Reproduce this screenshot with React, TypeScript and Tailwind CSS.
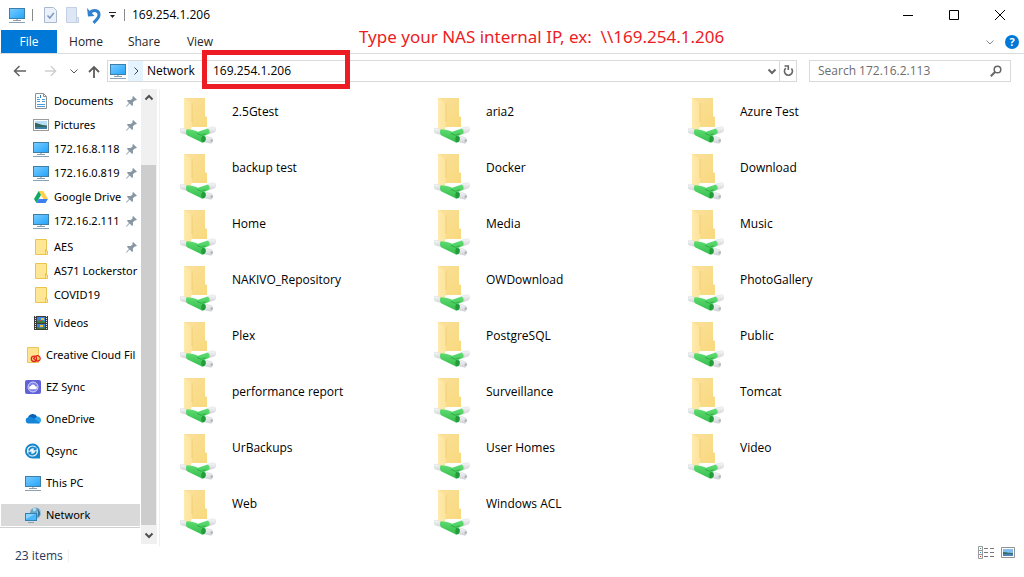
import { ReactNode } from 'react';
import { clsx } from 'clsx';

const FILES = [
  '2.5Gtest', 'aria2', 'Azure Test',
  'backup test', 'Docker', 'Download',
  'Home', 'Media', 'Music',
  'NAKIVO_Repository', 'OWDownload', 'PhotoGallery',
  'Plex', 'PostgreSQL', 'Public',
  'performance report', 'Surveillance', 'Tomcat',
  'UrBackups', 'User Homes', 'Video',
  'Web', 'Windows ACL',
];

function MonitorIcon() {
  return (
    <svg width="17" height="16" viewBox="0 0 17 16" className="shrink-0">
      <defs>
        <linearGradient id="screen" x1="0" y1="0" x2="1" y2="1">
          <stop offset="0" stopColor="#7ccbff" />
          <stop offset="0.5" stopColor="#4db8ff" />
          <stop offset="1" stopColor="#22a3f7" />
        </linearGradient>
      </defs>
      <rect x="0.5" y="1.5" width="15" height="10" fill="url(#screen)" stroke="#3d7fa8" />
      <path d="M4 13.5h8" stroke="#8c9fad" />
      <path d="M7 12.5h2" stroke="#b9c7d1" />
      <path d="M0 15.5h16" stroke="#8ba3b5" />
    </svg>
  );
}

function DocumentIcon() {
  return (
    <svg width="16" height="16" viewBox="0 0 16 16" className="shrink-0">
      <path d="M2.5 0.5h8l3 3v12h-11z" fill="#fff" stroke="#909090" />
      <path d="M10.5 0.5v3h3" fill="none" stroke="#909090" />
      <path d="M4 4.5h2M4 6.5h3M9 6.5h3M4 8.5h3M4 11.5h8M4 13.5h8M9 8.5h3" stroke="#4a9cd8" />
      <path d="M7 2h1v3H7z" fill="#2b7dbd" />
    </svg>
  );
}

function PictureIcon() {
  return (
    <svg width="16" height="16" viewBox="0 0 16 16" className="shrink-0">
      <rect x="0.5" y="2.5" width="15" height="11" fill="#fff" stroke="#9b9b9b" />
      <path d="M2 4h12v8H2z" fill="#b8dcf5" />
      <path d="M2 6c3 0 5 2 12 2.5V10H2z" fill="#32685d" />
      <path d="M2 10h12v2H2z" fill="#3f7ea8" />
    </svg>
  );
}

function FolderIcon() {
  return (
    <svg width="16" height="16" viewBox="0 0 16 16" className="shrink-0">
      <path d="M2.5 0.5h11v11.5h1v3.5h-12z" fill="#ffe694" stroke="#e8c553" />
      <path d="M12.5 15V10.5h1.5" fill="none" stroke="#e8c553" />
    </svg>
  );
}

function DriveIcon() {
  return (
    <svg width="16" height="16" viewBox="0 0 16 16" className="shrink-0">
      <path d="M5.7 2h4.6l4.6 8h-4.6z" fill="#ffcf48" />
      <path d="M5.7 2l2.3 4-4.6 8L1 10z" fill="#11a861" />
      <path d="M5.6 10h9.3l-2.3 4H3.4z" fill="#3d7ef0" />
    </svg>
  );
}

function VideoIcon() {
  return (
    <svg width="16" height="16" viewBox="0 0 16 16" className="shrink-0">
      <path d="M1 1h14v14H1z" fill="#3c3c3c" />
      <path d="M2.5 1v14M13.5 1v14" stroke="#e5e5e5" strokeDasharray="1 1" />
      <path d="M4 2h8v6H4zM4 9h8v5H4z" fill="#3c86d8" />
      <path d="M4 6l4-1 4 2v1H4zM4 12l4 1 4-1v2H4z" fill="#3f7b30" />
      <path d="M8 3h3v2H8zM7 10h3v2H7z" fill="#edc13c" />
      <path d="M7 5h2v1H7z" fill="#d64635" />
    </svg>
  );
}

function CreativeCloudIcon() {
  return (
    <svg width="16" height="16" viewBox="0 0 16 16" className="shrink-0">
      <path d="M2.5 0.5h11v15h-11z" fill="#ffe391" stroke="#ebc65b" />
      <g fill="none" stroke="#e1251b" strokeWidth="1.3">
        <circle cx="9" cy="11.8" r="2.7" />
        <path d="M8 12l2.500-2.600c1.500-1.400 4.700-.6 4.700 2s-3 3.300-4.500 1.800L8.500 11" />
      </g>
    </svg>
  );
}

function EzSyncIcon() {
  return (
    <svg width="16" height="16" viewBox="0 0 16 16" className="shrink-0">
      <rect y="1" width="16" height="14" rx="2" fill="#6161d8" />
      <circle cx="8" cy="8" r="5" fill="#7f82e8" stroke="#d5d6fa" strokeWidth="1" />
      <path d="M5.5 10.2a1.5 1.5 0 0 1 .2-3 2.4 2.4 0 0 1 4.6 0 1.5 1.5 0 0 1 .2 3z" fill="#fff" />
    </svg>
  );
}

function OneDriveIcon() {
  return (
    <svg width="16" height="16" viewBox="0 0 16 16" className="shrink-0">
      <path d="M3 7a4.900 4.900 0 0 1 9.200-1.200L9 9z" fill="#0a63b8" />
      <path d="M9 8l3.200-2.500a3.600 3.600 0 0 1 3.800 3.700c0 2-1.400 3.300-3.200 3.300z" fill="#2ba5ec" />
      <path d="M3.300 6.300c2-.8 3.900-.2 5 .7l6.600 5c-.6.4-1.300.6-2 .6H3.400a3.200 3.200 0 0 1-.1-6.300z" fill="#1585d8" />
    </svg>
  );
}

function QsyncIcon() {
  return (
    <svg width="16" height="16" viewBox="0 0 16 16" className="shrink-0">
      <path d="M7.5 0.5A7.3 7.3 0 0 1 15 8v7.5H7.5a7.5 7.5 0 0 1 0-15z" fill="#1785ca" />
      <circle cx="7.5" cy="8" r="5.6" fill="#e9f6fd" />
      <path d="M4 7.6a3.6 3.6 0 0 1 6.3-2M11 8.4a3.6 3.6 0 0 1-6.3 2" fill="none" stroke="#1b88cc" strokeWidth="1.8" />
      <path d="M11.6 3.5v3.8H8zM3.4 12.5V8.7H7z" fill="#1b88cc" />
    </svg>
  );
}

function NetworkIcon() {
  return (
    <svg width="17" height="16" viewBox="0 0 17 16" className="shrink-0">
      <circle cx="10.5" cy="6" r="5.5" fill="#6ba7c8" />
      <path d="M8 1.500c2-1.300 4 .3 3 1.800S8.600 4.500 8 4zM12 4l3-1c1 2 1 4-.6 6L12 7z" fill="#b6dcea" />
      <path d="M12.500 2c2 1 3 3 2.500 6l-2 2z" fill="#3f7596" />
      <rect x="0.5" y="6.5" width="11" height="7" fill="#49b7fb" stroke="#2f81b5" />
      <path d="M1 7h9L1 12z" fill="#8bd4ff" />
      <path d="M3 15.500h6" stroke="#8ba3b5" />
    </svg>
  );
}

function PinIcon() {
  return (
    <svg width="11" height="11" viewBox="0 0 10 10" className="shrink-0">
      <path d="M6.500 0L10 3.500 8.800 4.200 8 4 6.300 5.700V8.300L5.500 9 3.300 6.800 0.500 9.700 0 9.300 2.700 6.300 0.800 4.400 1.700 3.600 4.300 3.700 6 2 5.800 1z" fill="#8897a3" />
    </svg>
  );
}

function SharedFolderIcon() {
  return (
    <svg width="36" height="46" viewBox="0 0 36 46" className="shrink-0">
      <defs>
        <linearGradient id="back" x1="0" y1="0" x2="1" y2="1">
          <stop offset="0" stopColor="#fae09a" />
          <stop offset="1" stopColor="#f9d97c" />
        </linearGradient>
        <linearGradient id="flap" x1="0" y1="0" x2="1" y2="0">
          <stop offset="0" stopColor="#ffeaae" />
          <stop offset="1" stopColor="#fde49c" />
        </linearGradient>
        <linearGradient id="cap" x1="0" y1="0" x2="0" y2="1">
          <stop offset="0" stopColor="#f7f8f9" />
          <stop offset="1" stopColor="#cfd2d5" />
        </linearGradient>
        <linearGradient id="pipe" x1="0" y1="0" x2="0" y2="1">
          <stop offset="0" stopColor="#5fdc72" />
          <stop offset="1" stopColor="#36bd4d" />
        </linearGradient>
      </defs>
      <path d="M4 0h21v18l2 1v10H12L4 33z" fill="url(#back)" />
      <path d="M4 0l8 5v22l-2 7-6-1z" fill="url(#flap)" />
      <path d="M12 5v19" stroke="#e9c469" strokeWidth="0.6" />
      <path d="M1 30l7 1.500v5.500l-7-2c-1.300-1-1.300-4 0-5z" fill="url(#cap)" stroke="#d4d7d9" strokeWidth="0.5" />
      <path d="M27 30.500l6.500-1.800c2.500 0 3 4 1 5.300L29 36z" fill="url(#cap)" stroke="#d4d7d9" strokeWidth="0.5" />
      <path d="M24 37.500l7.500 2.300c2 1 1.500 5.300-.7 5.500L23 43.500z" fill="url(#cap)" stroke="#cbcfd2" strokeWidth="0.5" />
      <path d="M7 31.200c4 0 8 1.200 11 2.500l9-2.900c2.500-.4 3.800 4 1.300 5.400l-4 1.600c1.500.8 1.700 2.300 1.200 4-.5 2-1.700 3-3.500 2.600L8 37.800c-2.500-1.500-2.500-5.300-1-6.600z" fill="url(#pipe)" />
      <path d="M22.500 38c-1.400 1.200-1.600 4-.5 6.200 2.500.5 3.800-1.200 3.700-3.900 0-1.500-1.200-2.500-3.200-2.300z" fill="#249c3d" />
      <path d="M17 35.500l4.500 1.800 4-1.500" fill="none" stroke="#2fae46" strokeWidth="1" />
      <circle cx="31.7" cy="42.6" r="1.3" fill="#b4b9bd" />
    </svg>
  );
}

interface NavRowProps {
  icon: ReactNode;
  label: string;
  pinned?: boolean;
}

function QuickRow({ icon, label, pinned }: NavRowProps) {
  return (
    <a href="#" className="flex h-6 items-center whitespace-nowrap pl-[33px] pr-[3px]">
      <span className="flex w-[21px] shrink-0">{icon}</span>
      <span className="min-w-0 flex-1">{label}</span>
      {pinned && <PinIcon />}
    </a>
  );
}

function RootRow({ icon, label, selected }: { icon: ReactNode; label: string; selected?: boolean }) {
  return (
    <a href="#" className="flex h-8 items-center">
      <span
        className={clsx(
          'ml-px flex h-[22px] flex-1 items-center whitespace-nowrap pl-6',
          selected && 'bg-[#d9d9d9]'
        )}
      >
        <span className="flex w-[21px] shrink-0">{icon}</span>
        {label}
      </span>
    </a>
  );
}

function Chevron({ className }: { className?: string }) {
  return (
    <svg width="10" height="10" viewBox="0 0 10 10" fill="none" stroke="currentColor" className={className}>
      <path d="M1.500 3.500L5 7l3.500-3.500" />
    </svg>
  );
}

function TitleBar() {
  return (
    <header className="flex h-[30px] items-center pl-[9px]">
      <MonitorIcon />
      <span className="ml-1.5 h-3 w-px bg-[#8a8a8a]" />
      <button aria-label="Properties" className="ml-[11px]">
        <svg width="13" height="16" viewBox="0 0 13 16">
          <path d="M.5.5h9l3 3v12H.5z" fill="#eaf1fa" stroke="#a9bad0" />
          <path d="M3.500 8.500l2.300 2.500 4-5" fill="none" stroke="#7f99bb" strokeWidth="1.500" />
        </svg>
      </button>
      <button aria-label="New folder" className="ml-[9px]">
        <svg width="13" height="16" viewBox="0 0 13 16">
          <path d="M.5.5h10v10h2v5H.5z" fill="#dde7f5" stroke="#c3d0e3" />
          <path d="M10.500 15v-4.500" stroke="#c3d0e3" />
        </svg>
      </button>
      <button aria-label="Undo" className="ml-2">
        <svg width="14" height="17" viewBox="0 0 14 17">
          <path d="M3 5.500C7 2 12.300 3.500 12 8.200c-.2 3-2.500 5-5.500 7.600" fill="none" stroke="#2f80cf" strokeWidth="3" />
          <path d="M0 1l1 8.500L7.500 9z" fill="#2f80cf" />
        </svg>
      </button>
      <button aria-label="Customize toolbar" className="ml-2">
        <svg width="7" height="8" viewBox="0 0 7 8">
          <path d="M0 1.500h7" stroke="#222" />
          <path d="M1 4h5L3.500 7z" fill="#222" />
        </svg>
      </button>
      <span className="ml-2 h-3 w-px bg-[#8a8a8a]" />
      <h1 className="ml-[7px]">169.254.1.206</h1>
      <div className="ml-auto flex items-center gap-9 pr-[19px]">
        <button aria-label="Minimize">
          <svg width="10" height="10" viewBox="0 0 10 10"><path d="M0 5.500h10" stroke="#000" /></svg>
        </button>
        <button aria-label="Maximize">
          <svg width="10" height="10" viewBox="0 0 10 10"><path d="M.5.5h9v9h-9z" fill="none" stroke="#000" /></svg>
        </button>
        <button aria-label="Close">
          <svg width="10" height="10" viewBox="0 0 10 10"><path d="M0 0l10 10M10 0L0 10" stroke="#000" /></svg>
        </button>
      </div>
    </header>
  );
}

function RibbonTabs() {
  return (
    <nav className="flex h-6 items-stretch border-b border-[#dadbdc] pl-px text-[#262626]">
      <button className="w-14 bg-[#0078d7] text-white">File</button>
      <button className="w-[58px]">Home</button>
      <button className="w-[58px]">Share</button>
      <button className="w-[54px]">View</button>
      <div className="ml-auto flex items-center gap-[10px] pr-[5px]">
        <button aria-label="Expand ribbon"><Chevron className="text-[#888]" /></button>
        <button aria-label="Help" className="flex h-[14px] w-[14px] items-center justify-center rounded-full bg-[#0078d7] text-[11px] font-bold leading-none text-white">
          ?
        </button>
      </div>
    </nav>
  );
}

function AddressBar() {
  return (
    <div className="flex h-[34px] items-center pl-[13px] pr-[13px]">
      <button aria-label="Back">
        <svg width="14" height="12" viewBox="0 0 14 12" fill="none" stroke="#626262" strokeWidth="1.500"><path d="M13 6H2M6.500 1L1.500 6l5 5" /></svg>
      </button>
      <button aria-label="Forward" className="ml-[17px]">
        <svg width="13" height="12" viewBox="0 0 14 12" fill="none" stroke="#cfcfcf" strokeWidth="1.500"><path d="M1 6h11M7.500 1l5 5-5 5" /></svg>
      </button>
      <button aria-label="Recent locations" className="ml-3">
        <Chevron className="text-[#555]" />
      </button>
      <button aria-label="Up" className="ml-[9px]">
        <svg width="12" height="13" viewBox="0 0 12 13" fill="none" stroke="#5c5c5c" strokeWidth="1.800"><path d="M6 13V2M1 7l5-5 5 5" /></svg>
      </button>
      <div className="ml-[7px] flex h-[22px] flex-1 items-center border border-[#d9d9d9] pl-0.5">
        <MonitorIcon />
        <span className="ml-px flex h-5 w-[15px] items-center justify-center bg-[#e5f3ff]">
          <Chevron className="-rotate-90 text-[#444]" />
        </span>
        <a href="#" className="ml-1 w-[54px]">Network</a>
        <div className="relative ml-3 flex flex-1 items-center">
          <input aria-label="Address" defaultValue="169.254.1.206" className="w-full outline-none" />
          <span className="pointer-events-none absolute -left-[11px] -top-[13px] h-[39px] w-[148px] border-[5px] border-[#ed1c24]" />
        </div>
        <button aria-label="Previous locations" className="mr-0.5">
          <Chevron className="stroke-2 text-[#666]" />
        </button>
        <button aria-label="Refresh" className="flex h-5 w-[17px] items-center justify-center border-l border-[#d9d9d9]">
          <svg width="11" height="12" viewBox="0 0 11 12" fill="none" stroke="#666" strokeWidth="1.600">
            <path d="M2.800 3.200a4 4 0 1 0 5.600.3M1.500 1h3.800v4" />
          </svg>
        </button>
      </div>
      <label className="ml-3 flex h-[22px] w-[202px] items-center border border-[#d9d9d9] px-2">
        <input aria-label="Search" placeholder="Search 172.16.2.113" className="min-w-0 flex-1 outline-none placeholder:text-[#6d6d6d]" />
        <svg width="12" height="12" viewBox="0 0 12 12" fill="none" stroke="#666" strokeWidth="1.500">
          <circle cx="7.500" cy="4.500" r="3.300" />
          <path d="M5 7L.8 11.200" strokeWidth="2" />
        </svg>
      </label>
    </div>
  );
}

function Sidebar() {
  return (
    <aside className="flex w-40 shrink-0 items-start border-r border-[#f0f0f0]">
      <nav className="w-[140px] border-b border-[#d0d0d0] font-['Noto_Sans','Open_Sans',sans-serif] text-[11px]">
        <QuickRow icon={<DocumentIcon />} label="Documents" pinned />
        <QuickRow icon={<PictureIcon />} label="Pictures" pinned />
        <QuickRow icon={<MonitorIcon />} label="172.16.8.118" pinned />
        <QuickRow icon={<MonitorIcon />} label="172.16.0.819" pinned />
        <QuickRow icon={<DriveIcon />} label="Google Drive" pinned />
        <QuickRow icon={<MonitorIcon />} label="172.16.2.111" pinned />
        <div className="mt-0.5">
          <QuickRow icon={<FolderIcon />} label="AES" pinned />
          <QuickRow icon={<FolderIcon />} label="AS71 Lockerstor" />
          <QuickRow icon={<FolderIcon />} label="COVID19" />
        </div>
        <div className="py-1">
          <QuickRow icon={<VideoIcon />} label="Videos" />
        </div>
        <RootRow icon={<CreativeCloudIcon />} label="Creative Cloud Fil" />
        <RootRow icon={<EzSyncIcon />} label="EZ Sync" />
        <RootRow icon={<OneDriveIcon />} label="OneDrive" />
        <RootRow icon={<QsyncIcon />} label="Qsync" />
        <RootRow icon={<MonitorIcon />} label="This PC" />
        <div className="-mb-1">
          <RootRow icon={<NetworkIcon />} label="Network" selected />
        </div>
      </nav>
      <div className="mb-0.5 ml-px flex w-4 flex-col self-stretch bg-[#f0f0f0]">
        <button aria-label="Scroll up" className="flex h-[17px] items-center justify-center">
          <Chevron className="rotate-180 stroke-2 text-[#505050]" />
        </button>
        <div className="mr-px mt-[59px] flex-1 bg-[#cdcdcd]" />
        <button aria-label="Scroll down" className="flex h-[19px] items-center justify-center">
          <Chevron className="stroke-2 text-[#505050]" />
        </button>
      </div>
    </aside>
  );
}

function StatusBar() {
  return (
    <footer className="flex h-5 items-center pl-[15px] pr-[9px] text-[#1e395b]">
      <span className="w-[54px] border-r border-[#f0f0f0] leading-3">23 items</span>
      <div className="ml-auto flex items-center gap-[7px] pb-2">
        <button aria-label="Details view">
          <svg width="16" height="13" viewBox="0 0 16 13">
            <path d="M.5.5h4v12h-4zM.5 4.500h4M.5 8.500h4" fill="#fff" stroke="#9b9b9b" />
            <path d="M6 2.500h4M12 2.500h4M6 6.500h4M12 6.500h4M6 10.500h4M12 10.500h4" stroke="#777" />
            <path d="M2 2h1v1H2z" fill="#3f9b6d" />
            <path d="M2 6h1v1H2z" fill="#3593e6" />
            <path d="M2 10h1v1H2z" fill="#d83333" />
          </svg>
        </button>
        <button aria-label="Large icons view">
          <svg width="14" height="11" viewBox="0 0 14 11">
            <path d="M.5.5h13v10H.5z" fill="#fff" stroke="#929292" />
            <path d="M2 2h10v4H2z" fill="#82bdf2" />
            <path d="M2 5c3 0 5 1 10 1v1H2z" fill="#356d68" />
            <path d="M2 7h10v2H2z" fill="#4b83b5" />
          </svg>
        </button>
      </div>
    </footer>
  );
}

export default function App() {
  return (
    <div className="relative min-h-screen bg-white font-['Open_Sans','Noto_Sans',sans-serif] text-[12px] leading-4 text-black">
      <TitleBar />
      <RibbonTabs />
      <AddressBar />
      <p className="absolute left-[359px] top-[25px] whitespace-pre font-['Noto_Sans','Open_Sans',sans-serif] text-[17px] leading-6 text-[#ed1c24]">
        {'Type your NAS internal IP, ex:  \\\\169.254.1.206'}
      </p>
      <div className="flex pt-px">
        <Sidebar />
        <main className="grid flex-1 grid-cols-[repeat(auto-fill,254px)] content-start pl-5 pt-[9px]">
          {FILES.map((name) => (
            <a key={name} href="#" className="flex h-14 gap-4">
              <SharedFolderIcon />
              <span className="leading-7">{name}</span>
            </a>
          ))}
        </main>
      </div>
      <StatusBar />
    </div>
  );
}
